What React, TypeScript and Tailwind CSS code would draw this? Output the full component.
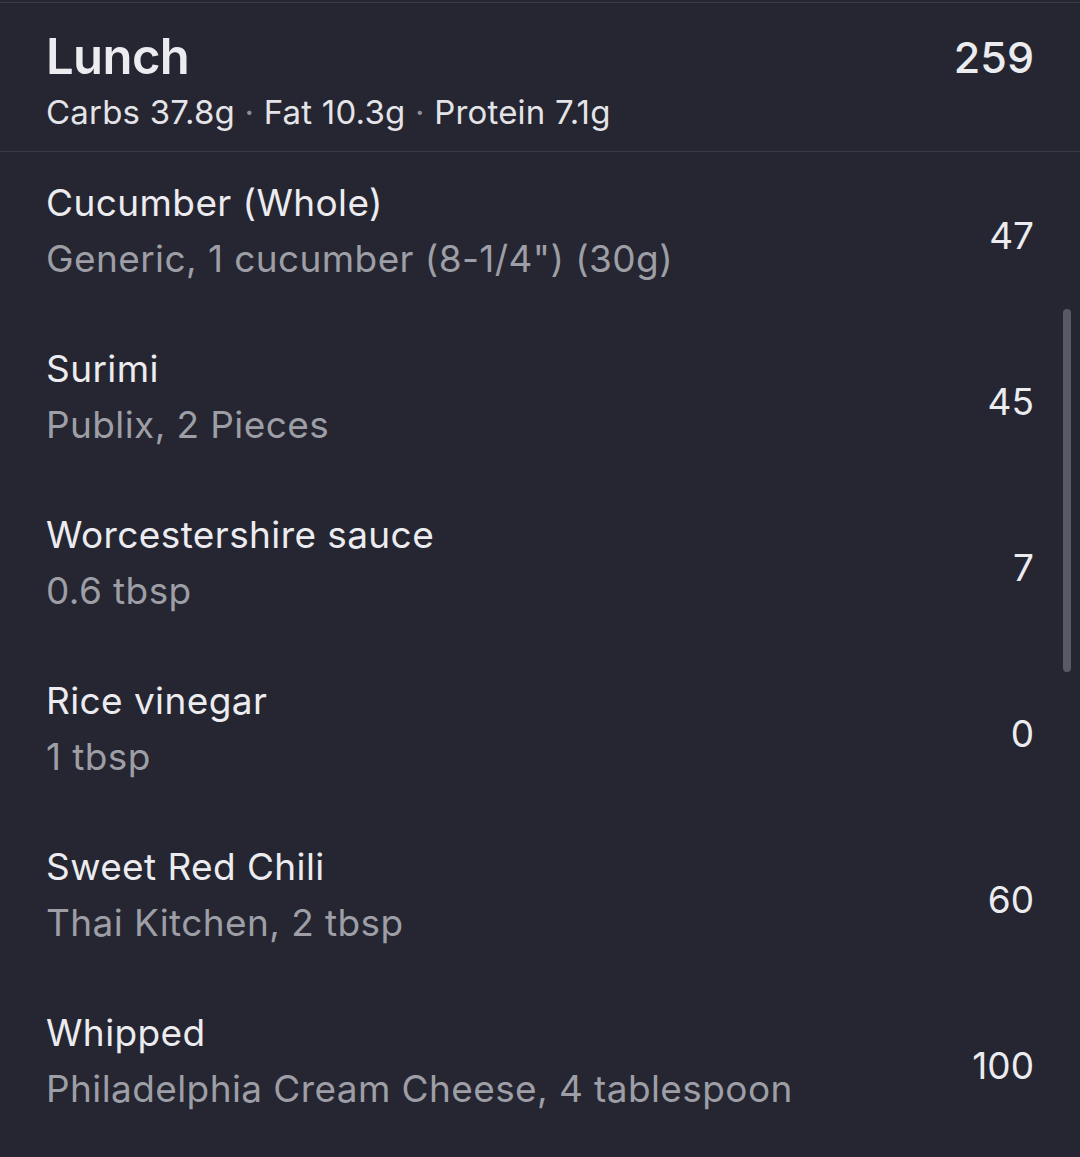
const items = [
  { name: 'Cucumber (Whole)', detail: 'Generic, 1 cucumber (8-1/4") (30g)', cal: 47 },
  { name: 'Surimi', detail: 'Publix, 2 Pieces', cal: 45 },
  { name: 'Worcestershire sauce', detail: '0.6 tbsp', cal: 7 },
  { name: 'Rice vinegar', detail: '1 tbsp', cal: 0 },
  { name: 'Sweet Red Chili', detail: 'Thai Kitchen, 2 tbsp', cal: 60 },
  { name: 'Whipped', detail: 'Philadelphia Cream Cheese, 4 tablespoon', cal: 100 },
]

const App = () => {
  return (
    <div
      className="relative h-[1157px] w-[1080px] overflow-hidden bg-[#252631] font-['Inter','Liberation_Sans',sans-serif]"
    >
      <div className="mt-[2px] border-t border-[#3b3c47]" />

      <header className="flex items-start justify-between border-b border-[#3a3b46] px-[46px] pt-[26px] pb-[17px]">
        <div>
          <h1 className="text-[49px] leading-[56px] font-semibold tracking-[-0.6px] text-[#ececf0]">Lunch</h1>
          <p className="mt-[5px] text-[33px] leading-[44px] tracking-[0.2px] text-[#e4e4e8]">
            Carbs 37.8g <span className="text-[#8d8e96]">·</span> Fat 10.3g{' '}
            <span className="text-[#8d8e96]">·</span> Protein 7.1g
          </p>
        </div>
        <span className="text-[43px] leading-[56px] font-medium text-[#ececf0]">259</span>
      </header>

      <ul>
        {items.map((item) => (
          <li key={item.name} className="flex h-[166px] items-center justify-between px-[46px]">
            <div className="pb-[8px] tracking-[0.4px]">
              <div className="text-[37px] leading-[56px] text-[#ececf0]">{item.name}</div>
              <div className="text-[37px] leading-[56px] text-[#9d9ea6]">{item.detail}</div>
            </div>
            <span className="text-[37px] leading-none text-[#ececf0]">{item.cal}</span>
          </li>
        ))}
      </ul>

      {/* scroll indicator */}
      <div className="absolute top-[309px] left-[1063px] h-[363px] w-[8px] rounded-full bg-[#575964]" />
    </div>
  )
}

export default App
